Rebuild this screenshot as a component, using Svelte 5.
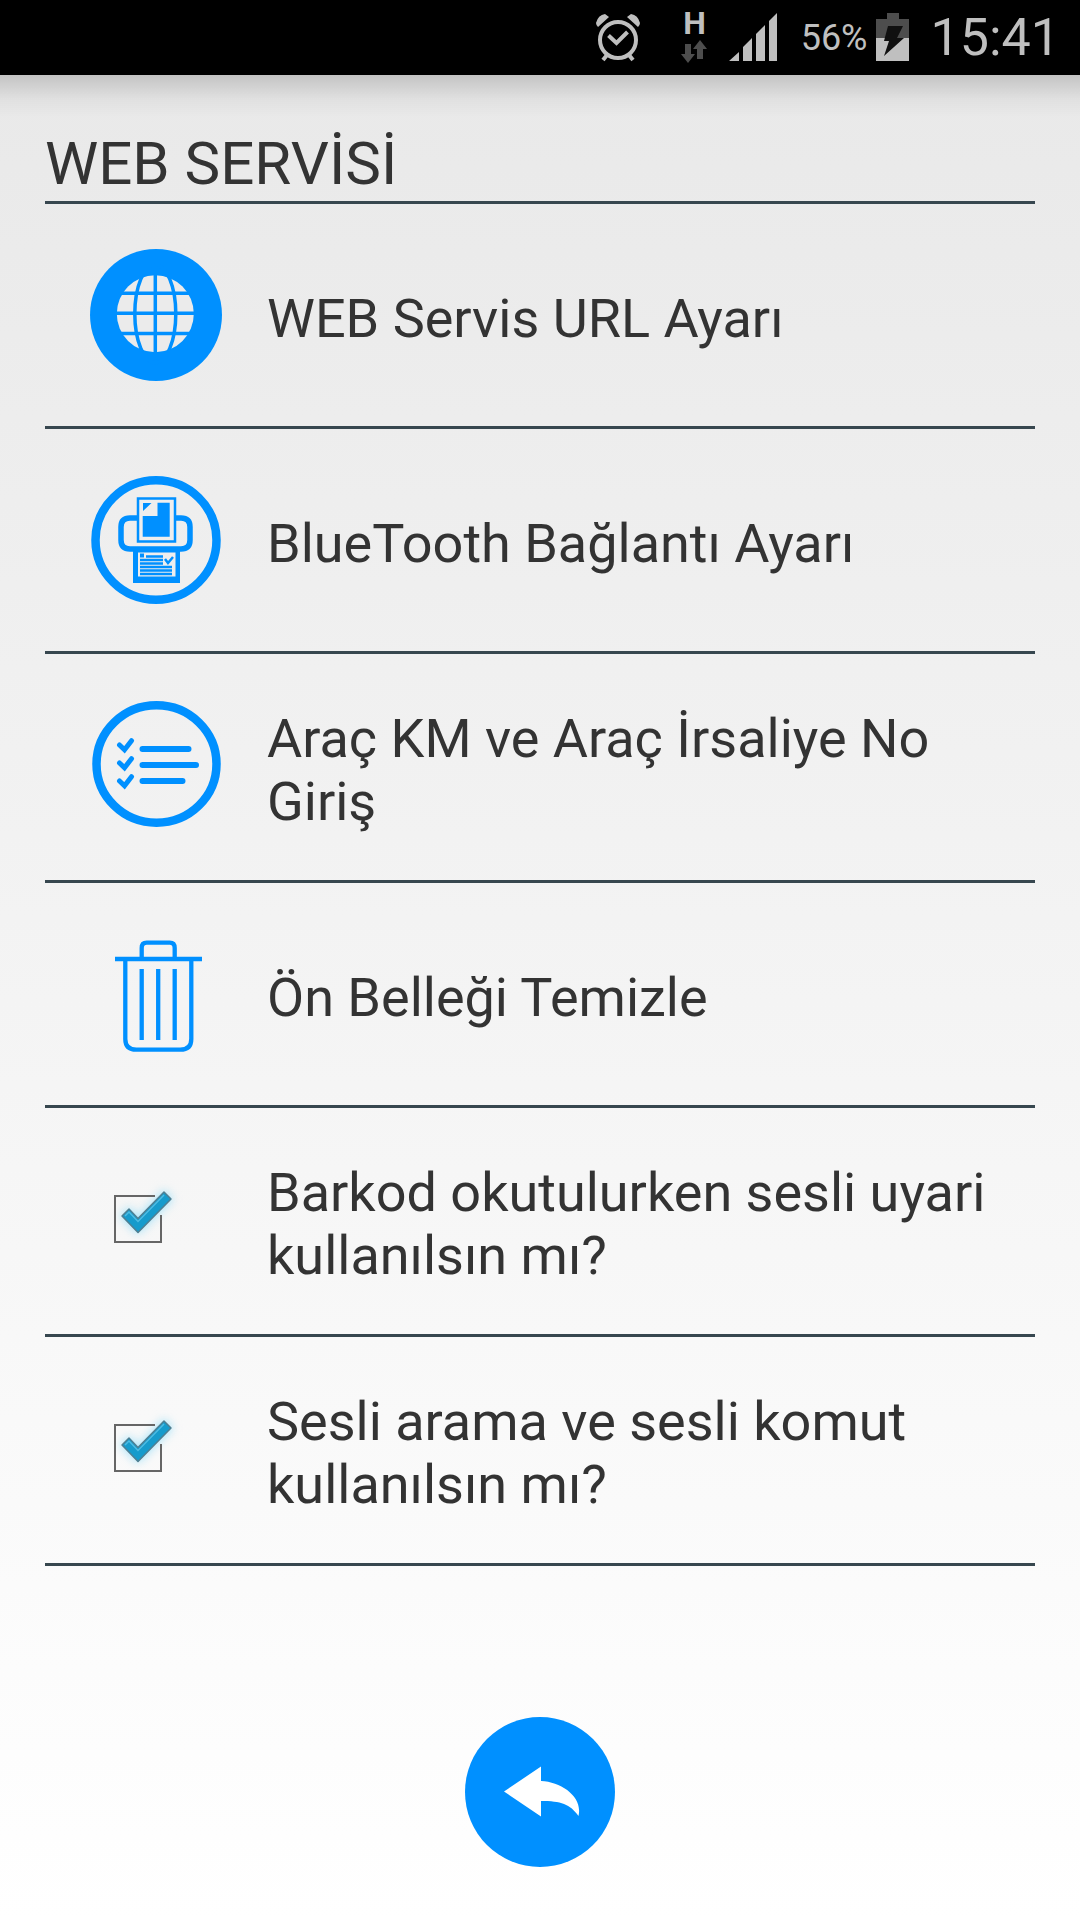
<script>
    let soundOnScan = true;
    let voiceCommands = true;

    const actions = [
        { id: 'url', label: 'WEB Servis URL Ayarı' },
        { id: 'printer', label: 'BlueTooth Bağlantı Ayarı' },
        { id: 'km', label: 'Araç KM ve Araç İrsaliye No Giriş' },
        { id: 'cache', label: 'Ön Belleği Temizle' }
    ];
</script>

<div class="screen">
    <header class="status-bar">
        <svg class="alarm" width="46" height="50" viewBox="0 0 46 50" aria-hidden="true">
            <g fill="none" stroke="#bfbfbf">
                <circle cx="23" cy="27" r="18" stroke-width="4" />
                <path d="M13.500 22.500l8 7.500 11-11" stroke-width="4" />
                <path d="M12 42l-4 5M34 42l4 5" stroke-width="4" />
            </g>
            <path d="M1 10Q3 2 10 1l4 3L3 14Q1 12 1 10zM45 10Q43 2 36 1l-4 3 11 10q2-2 2-4z" fill="#bfbfbf" />
        </svg>
        <div class="network">
            <span>H</span>
            <svg width="28" height="24" viewBox="0 0 28 24" aria-hidden="true">
                <path d="M4 4h6v10h4L7 23 0 14h4zM16 19V9h-4l7-9 7 9h-4v10z" fill="#4d4d4d" />
            </svg>
        </div>
        <svg class="signal" width="49" height="50" viewBox="0 0 49 50" aria-hidden="true">
            <path d="M0 48l10-9v9zM14 48V34l9-9v23zM27 48V21l9-9v36zM40 48V8l8-8v48z" fill="#bfbfbf" />
        </svg>
        <span class="percent">56%</span>
        <svg class="battery" width="33" height="50" viewBox="0 0 33 50" aria-hidden="true">
            <path d="M0 6h11V0h12v6h10v20H0z" fill="#4d4d4d" />
            <path d="M0 25h33v23H0z" fill="#bfbfbf" />
            <path d="M12 13h15l-6 12h7L8 43l5-15H8z" fill="#101010" />
        </svg>
        <time class="clock">15:41</time>
    </header>

    <main>
        <h1>WEB SERVİSİ</h1>

        {#each actions as a (a.id)}
            <button class="row" type="button">
                <svg class="icon" viewBox="0 0 132 132" aria-hidden="true">
                    {#if a.id === 'url'}
                        <circle cx="66" cy="66" r="66" fill="#0090ff" />
                        <circle cx="65.300" cy="64.700" r="38.500" fill="#ebebeb" />
                        <g fill="none" stroke="#0090ff" stroke-width="3.500">
                            <path d="M65.300 24v82M24 44.300h82M24 64.300h82M24 84.500h82" />
                            <ellipse cx="65.300" cy="64.700" rx="20.500" ry="49" />
                        </g>
                    {:else if a.id === 'printer'}
                        <ellipse cx="66" cy="66" rx="60.500" ry="59.700" fill="none" stroke="#0090ff" stroke-width="8.500" />
                        <path d="M47 44h-7q-9 0-9 9v13q0 9 9 9h51q9 0 9-9V53q0-9-9-9h-5" fill="none" stroke="#0090ff" stroke-width="5.500" />
                        <path d="M48 24.500h37v43H48z" fill="#eee" stroke="#0090ff" stroke-width="2.500" />
                        <path d="M67.500 28.700h12.200v34h-27V42h14.800zM53 29h8.500L53 37z" fill="#0090ff" />
                        <path d="M43 75h47v34H43z" fill="#0090ff" />
                        <path d="M48 78.500h37.500v24H48z" fill="#eee" />
                        <path d="M50 79.500h4v4h-4z" fill="#0090ff" />
                        <path d="M56 82.500h17M50 86h23M50 89.500h23M50 93h32M50 96.500h32M50 100h32" stroke="#0090ff" stroke-width="2.400" />
                        <path d="M75 85l3 4 5-6" fill="none" stroke="#0090ff" stroke-width="2.500" />
                    {:else if a.id === 'km'}
                        <ellipse cx="66.500" cy="65" rx="60" ry="58.700" fill="none" stroke="#0090ff" stroke-width="8.500" />
                        <g fill="none" stroke="#0090ff" stroke-linecap="round">
                            <path d="M52.500 50h46M52.500 66h53.500M52.500 82h40" stroke-width="6" />
                            <path d="M29.500 46l5 4.700 7-9M29.500 64l5 4.700 7-9M29.500 82l5 4.700 7-9" stroke-width="5" />
                        </g>
                    {:else}
                        <g fill="none" stroke="#0090ff" stroke-width="4.300">
                            <path d="M25 31h87M35.300 31v80q0 10.700 11 10.700h44q11 0 11-10.700V31" />
                            <path d="M51.700 31V20q0-5.300 5-5.300h23q5 0 5 5.300v11M51.700 41v71M68.200 41v71M84.700 41v71" />
                        </g>
                    {/if}
                </svg>
                <span class="label">{a.label}</span>
            </button>
        {/each}

        <label class="row">
            <span class="icon check">
                <input type="checkbox" bind:checked={soundOnScan} />
                <svg viewBox="0 0 132 132" aria-hidden="true">
                    {@render tick(soundOnScan)}
                </svg>
            </span>
            <span class="label">Barkod okutulurken sesli uyari kullanılsın mı?</span>
        </label>
        <label class="row">
            <span class="icon check">
                <input type="checkbox" bind:checked={voiceCommands} />
                <svg viewBox="0 0 132 132" aria-hidden="true">
                    {@render tick(voiceCommands)}
                </svg>
            </span>
            <span class="label">Sesli arama ve sesli komut kullanılsın mı?</span>
        </label>
    </main>

    <footer>
        <button class="back" type="button" aria-label="Geri">
            <svg viewBox="0 0 150 150" aria-hidden="true">
                <path d="M39 74.500L76 49.500V64C97 65 118 80 113.500 99 105 87 96 84 76 84v15.500z" fill="#fff" />
            </svg>
        </button>
    </footer>
</div>

{#snippet tick(on)}
    {#if on}
        <path class="glow" d="M32 63l7-7 9 10 26-27 7 7-33 33z" />
        <path d="M65 43H25v46h46V62" fill="none" stroke="#666" stroke-width="2" />
        <path d="M32 63l7-7 9 9.500 26-26.500 7 7L48 79.500z" fill="#169bcc" stroke="#4f7f92" stroke-width="1.500" stroke-linejoin="round" />
        <path d="M35 63l4-4 9 9.500 26-26.500" fill="none" stroke="#4fbbe2" stroke-width="1.500" />
    {:else}
        <path d="M25 43h46v46H25z" fill="none" stroke="#666" stroke-width="2" />
    {/if}
{/snippet}

<style>
    :global(body) { margin: 0; background: #fff; }

    .screen {
        display: flex; flex-direction: column; min-height: 100vh;
        font-family: Roboto, "Noto Sans", sans-serif; color: #333;
        background: linear-gradient(#e8e8e8, #fff);
    }

    .status-bar {
        display: flex; align-items: center; justify-content: flex-end;
        height: 75px; padding-right: 20px; background: #000; color: #bfbfbf;
    }
    .network { display: flex; flex-direction: column; align-items: center; gap: 6px; margin-left: 40px; }
    .network span { font-size: 32px; line-height: 22px; font-weight: 700; }
    .network svg { display: block; }
    .signal { margin-left: 20px; }
    .percent { margin-left: 23px; font-size: 36px; line-height: 54px; }
    .battery { margin-left: 8px; }
    .clock { margin-left: 22px; font-size: 52px; line-height: 63px; }

    main {
        padding: 54px 45px 0;
        background: linear-gradient(rgba(0,0,0,0.16), rgba(0,0,0,0.04) 24px, transparent 42px);
    }
    h1 { margin: 0; padding-bottom: 2px; font-size: 60px; line-height: 70px; font-weight: 400; border-bottom: 3px solid #37474f; }

    .row {
        display: flex; align-items: center; gap: 45px;
        width: 100%; box-sizing: border-box; padding: 45px 0 45px 45px;
        border: 0; border-bottom: 3px solid #37474f; background: none;
        font: inherit; color: inherit; text-align: left; cursor: pointer;
    }
    .icon { width: 132px; height: 132px; flex-shrink: 0; align-self: flex-start; }
    .label { padding: 8px 0 2px; font-size: 54px; line-height: 63px; }

    .check { position: relative; }
    .check input { appearance: none; display: block; width: 100%; height: 100%; margin: 0; cursor: pointer; }
    .check svg { position: absolute; inset: 0; pointer-events: none; }
    .glow { fill: #a5e2f8; stroke: #a5e2f8; stroke-width: 3; filter: blur(5px); }

    footer { display: flex; justify-content: center; margin-top: auto; padding: 45px 0 53px; }
    .back { width: 150px; height: 150px; padding: 0; border: 0; border-radius: 50%; background: #0090ff; cursor: pointer; }
    .back svg { display: block; }
</style>
